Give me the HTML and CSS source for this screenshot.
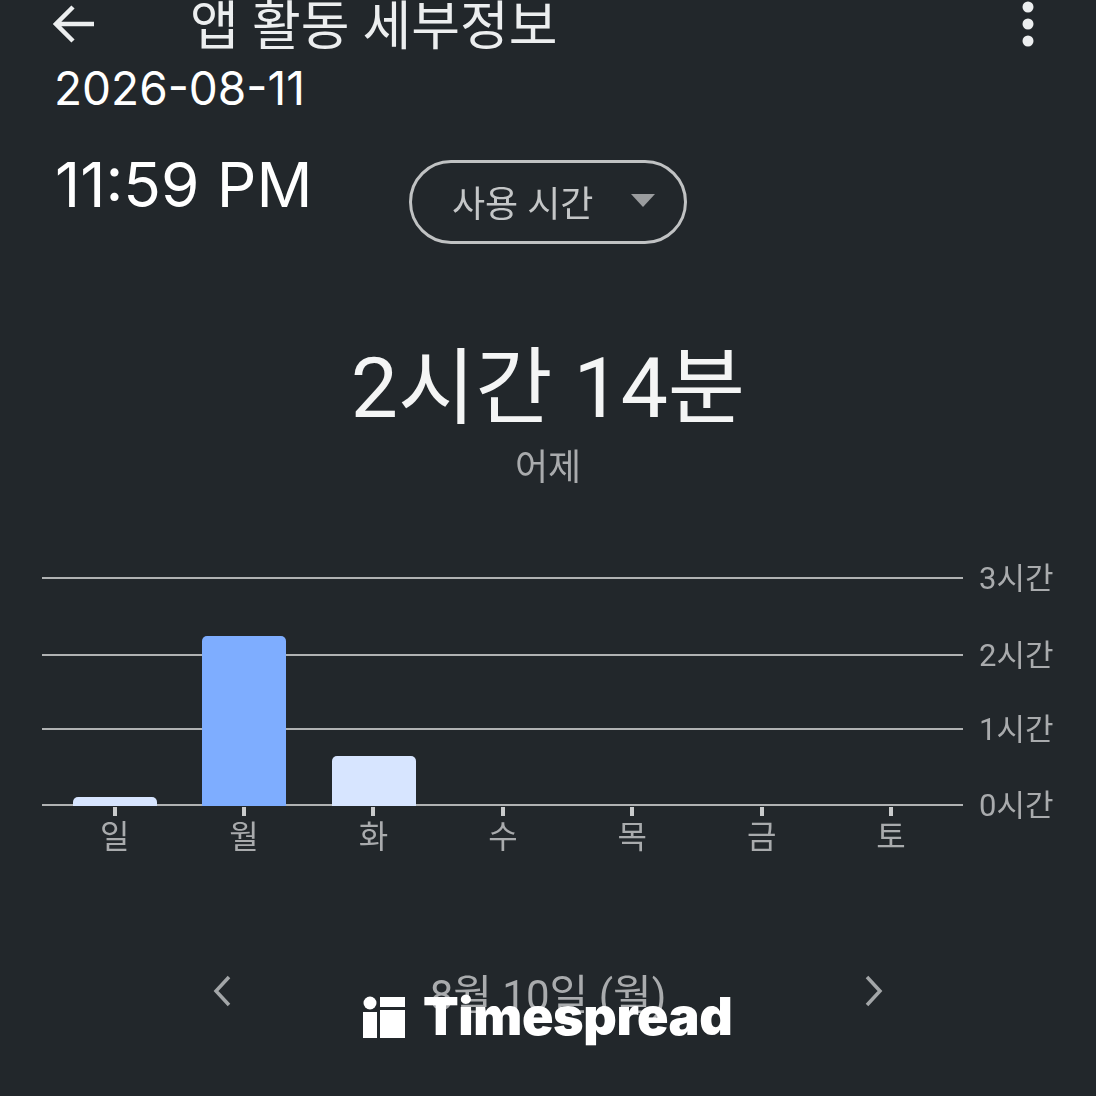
FILE: index.html
```html
<!DOCTYPE html>
<html lang="ko">
<head>
  <meta charset="UTF-8">
  <title>앱 활동 세부정보</title>
  <link rel="stylesheet" href="styles.css">
</head>
<body>

  <div class="screen">
    <div class="topbar soft">
      <svg class="back" width="44" height="44" viewBox="0 0 44 44"><path d="M41 22H4M20 5 3 22l17 17" fill="none" stroke="#eceeef" stroke-width="4.5"/></svg>
      <div class="title">앱 활동 세부정보</div>
      <svg class="more" width="12" height="46" viewBox="0 0 12 46"><circle cx="6" cy="6" r="5.5" fill="#eceeef"/><circle cx="6" cy="23" r="5.5" fill="#eceeef"/><circle cx="6" cy="40" r="5.5" fill="#eceeef"/></svg>
    </div>

    <div class="date">2026-08-11</div>

    <div class="time-row">
      <div class="time">11:59 PM</div>
      <div class="pill soft">
        <span>사용 시간</span>
        <i class="caret"></i>
      </div>
    </div>

    <div class="total soft">2시간 14분</div>
    <div class="sub soft">어제</div>

    <div class="chart soft">
      <div class="plot">
        <div class="lines">
          <div class="line"></div>
          <div class="line"></div>
          <div class="line"></div>
          <div class="line"></div>
        </div>
        <div class="bars">
          <div class="col"><div class="bar light" style="height: 9px"></div></div>
          <div class="col"><div class="bar blue" style="height: 170px"></div></div>
          <div class="col"><div class="bar light" style="height: 50px"></div></div>
          <div class="col"></div>
          <div class="col"></div>
          <div class="col"></div>
          <div class="col"></div>
        </div>
      </div>
      <div class="ylabels">
        <span>3시간</span>
        <span>2시간</span>
        <span>1시간</span>
        <span>0시간</span>
      </div>
    </div>

    <div class="days soft">
      <div class="day"><i></i>일</div>
      <div class="day"><i></i>월</div>
      <div class="day"><i></i>화</div>
      <div class="day"><i></i>수</div>
      <div class="day"><i></i>목</div>
      <div class="day"><i></i>금</div>
      <div class="day"><i></i>토</div>
    </div>

    <div class="nav soft">
      <svg width="20" height="32" viewBox="0 0 20 32"><path d="M17 2 4 16l13 14" fill="none" stroke="#a3a6a8" stroke-width="3.5"/></svg>
      <div class="nav-date">8월 10일 (월)</div>
      <svg width="20" height="32" viewBox="0 0 20 32"><path d="M3 2l13 14L3 30" fill="none" stroke="#a3a6a8" stroke-width="3.5"/></svg>
    </div>

    <div class="mark">
      <svg width="42" height="42" viewBox="0 0 42 42"><circle cx="7" cy="7" r="6.5" fill="#fff"/><rect x="0" y="16" width="14" height="26" fill="#fff"/><rect x="17" y="1" width="25" height="10" fill="#fff"/><rect x="17" y="14" width="25" height="28" fill="#fff"/></svg>
      <span>Timespread</span>
    </div>
  </div>

</body>
</html>
```

FILE: styles.css
```css
body {
  margin: 0;
  background: #22272b;
  font-family: Roboto, "Noto Sans CJK KR", sans-serif;
  color: #fff;
}

.screen {
  position: relative;
  width: 1096px;
  height: 1096px;
  overflow: hidden;
}

/* the source photo is slightly blurry except for the date, time and logo */
.soft {
  filter: blur(0.6px);
}

.topbar {
  display: flex;
  align-items: center;
  height: 48px;
  padding: 0 62px 0 53px;
}

.back {
  margin-right: 93px;
}

.title {
  flex: 1;
  margin-top: 5px;
  font-size: 53px;
  line-height: 48px;
  color: #eceeef;
}

.date {
  margin: 12px 0 0 54px;
  font-family: Inter, sans-serif;
  font-size: 46px;
  line-height: 56px;
}

.time-row {
  display: flex;
  align-items: flex-start;
  margin-top: 30px;
  padding-left: 55px;
}

.time {
  width: 354px;
  font-family: Inter, sans-serif;
  font-size: 62px;
  line-height: 78px;
}

.pill {
  display: flex;
  align-items: center;
  justify-content: space-between;
  box-sizing: border-box;
  width: 278px;
  height: 84px;
  margin-top: 14px;
  padding: 0 29px 3px 40px;
  border: 3px solid #c0c2c3;
  border-radius: 42px;
  font-size: 36px;
  color: #c4c6c7;
}

.caret {
  width: 0;
  height: 0;
  border-left: 12px solid transparent;
  border-right: 12px solid transparent;
  border-top: 13px solid #9a9c9e;
}

.total {
  margin-top: 93px;
  text-align: center;
  font-size: 84px;
  line-height: 104px;
  color: #f4f5f5;
}

.sub {
  margin-top: 4px;
  text-align: center;
  font-size: 36px;
  line-height: 46px;
  color: #a9abad;
}

.chart {
  display: flex;
  margin-top: 86px;
  padding-left: 42px;
}

.plot {
  position: relative;
  width: 921px;
  height: 229px;
}

.lines {
  display: grid;
  grid-template-rows: 77px 74px 76px 2px;
  height: 229px;
}

.line {
  height: 2px;
  background: #b0b2b3;
}

.bars {
  position: absolute;
  left: 8.4px;
  bottom: 0;
  display: grid;
  grid-template-columns: repeat(7, 129.4px);
  align-items: end;
  height: 229px;
}

.col {
  display: flex;
  justify-content: center;
}

.bar {
  width: 84px;
  border-radius: 5px 5px 0 0;
}

.blue {
  background: #7eadff;
}

.light {
  background: #d7e5ff;
}

.ylabels {
  display: grid;
  grid-template-rows: 77px 74px 76px 2px;
  margin-left: 16px;
  padding-top: 1px;
  font-size: 31px;
  color: #a9abad;
}

.ylabels span {
  height: 2px;
  line-height: 2px;
}

.days {
  display: grid;
  grid-template-columns: repeat(7, 129.4px);
  padding-left: 50px;
}

.day {
  display: flex;
  flex-direction: column;
  align-items: center;
  font-size: 32px;
  line-height: 42px;
  color: #a9abad;
}

.day i {
  width: 4px;
  height: 9px;
  background: #c9cbcc;
}

.nav {
  display: flex;
  align-items: center;
  justify-content: space-between;
  margin-top: 109px;
  padding: 0 212px;
  height: 48px;
}

.nav-date {
  font-size: 42px;
  color: #a9abad;
}

.mark {
  position: absolute;
  left: 363px;
  top: 992px;
  display: flex;
  align-items: center;
  gap: 18px;
  font-family: Inter, sans-serif;
  font-weight: 900;
  font-size: 52px;
  letter-spacing: -0.4px;
  line-height: 50px;
  color: #fff;
}
```
